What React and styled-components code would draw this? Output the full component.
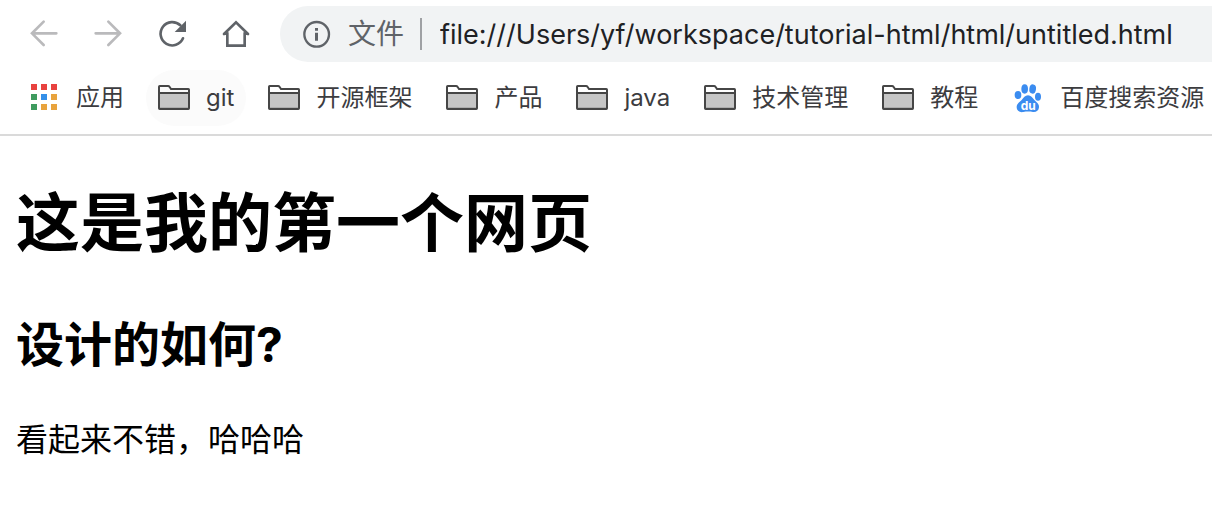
import React from "react";
import styled, { createGlobalStyle } from "styled-components";

const folders = ["git", "开源框架", "产品", "java", "技术管理", "教程"];

const appDots = [
  ["#e8423f", "#e8423f", "#e8423f"],
  ["#3f9b5f", "#348fe8", "#e8a33d"],
  ["#3f9b5f", "#e8a33d", "#e8a33d"],
];

const BackIcon = () => (
  <Icon viewBox="0 0 96 96" aria-hidden="true">
    <Stroke d="M85 46H13M47 11L12 46L47 81" />
  </Icon>
);

const ForwardIcon = () => (
  <Icon viewBox="0 0 96 96" aria-hidden="true">
    <Stroke d="M11 46H83M49 11L84 46L49 81" />
  </Icon>
);

const ReloadIcon = () => (
  <Icon viewBox="0 0 96 96" aria-hidden="true">
    <Stroke d="M81 61A35 35 0 1 1 73 22" />
    <path d="M90 8V42H56Z" fill="currentColor" />
  </Icon>
);

const HomeIcon = () => (
  <Icon viewBox="0 0 96 96" aria-hidden="true">
    <Stroke d="M12 48L48 13L84 48M14 47H22V83H74V47H82" />
  </Icon>
);

const InfoIcon = () => (
  <Icon viewBox="0 0 96 96" aria-hidden="true">
    <circle cx="50" cy="49" r="37" fill="none" stroke="currentColor" strokeWidth="7" />
    <path d="M45 30H54V38H45ZM45 44H54V68H45Z" fill="currentColor" />
  </Icon>
);

const AppsIcon = () => (
  <Icon viewBox="0 0 96 96" aria-hidden="true">
    {appDots.map((row, y) =>
      row.map((color, x) => (
        <rect
          key={`${x}-${y}`}
          x={9 + x * 30}
          y={6 + y * 30}
          width="18"
          height="18"
          fill={color}
        />
      ))
    )}
  </Icon>
);

const FolderIcon = () => (
  <Icon viewBox="0 0 96 96" aria-hidden="true">
    <path d="M3 33H93V81H3Z" fill="#c6c6c6" />
    <path d="M3 75H93V81H3Z" fill="#adadad" />
    <path
      d="M3 14Q3 12 5 12H30Q33 12 35 15L39 21H91Q93 21 93 23V79Q93 81 91 81H5Q3 81 3 79ZM3 33H93"
      fill="none"
      stroke="#464646"
      strokeWidth="6"
    />
  </Icon>
);

const BaiduIcon = () => (
  <Icon viewBox="0 0 96 96" aria-hidden="true">
    <g fill="#3b8cf0">
      <ellipse cx="18" cy="39" rx="10" ry="12" />
      <ellipse cx="38" cy="21" rx="10" ry="14" />
      <ellipse cx="62" cy="21" rx="10" ry="14" transform="rotate(8 62 21)" />
      <ellipse cx="78" cy="44" rx="9" ry="12" />
      <path d="M48 40C57 40 61 47 67 54C74 61 82 66 81 76C80 87 72 91 63 90C53 88 44 88 34 90C23 92 14 86 14 75C14 65 23 61 29 54C35 47 39 40 48 40Z" />
    </g>
    <DuText x="49" y="84" textAnchor="middle">
      du
    </DuText>
  </Icon>
);

const App = () => (
  <>
    <GlobalStyle />
    <Toolbar>
      <NavButton aria-label="后退" disabled>
        <BackIcon />
      </NavButton>
      <NavButton aria-label="前进" disabled>
        <ForwardIcon />
      </NavButton>
      <NavButton aria-label="重新加载">
        <ReloadIcon />
      </NavButton>
      <NavButton aria-label="主页">
        <HomeIcon />
      </NavButton>
      <AddressBar>
        <InfoIcon />
        <Scheme htmlFor="url">文件</Scheme>
        <Divider />
        <UrlInput
          id="url"
          type="text"
          spellCheck={false}
          defaultValue="file:///Users/yf/workspace/tutorial-html/html/untitled.html"
        />
      </AddressBar>
    </Toolbar>
    <BookmarkBar aria-label="书签">
      <Bookmark>
        <AppsIcon />
        应用
      </Bookmark>
      {folders.map((name) => (
        <Bookmark key={name} $active={name === "git"}>
          <FolderIcon />
          {name}
        </Bookmark>
      ))}
      <Bookmark>
        <BaiduIcon />
        百度搜索资源
      </Bookmark>
    </BookmarkBar>
    <Page>
      <Title>这是我的第一个网页</Title>
      <Subtitle>设计的如何?</Subtitle>
      <Text>看起来不错，哈哈哈</Text>
    </Page>
  </>
);

const GlobalStyle = createGlobalStyle`
  * {
    box-sizing: border-box;
  }

  body {
    margin: 0;
    overflow-x: hidden;
    background: #fff;
    font-family: Inter, "Noto Sans CJK SC", sans-serif;
  }

  button,
  input {
    font-family: inherit;
  }
`;

const Icon = styled.svg`
  display: block;
  flex: none;
  width: 32px;
  height: 32px;
`;

const Stroke = styled.path`
  fill: none;
  stroke: currentColor;
  stroke-width: 8px;
  stroke-linecap: round;
`;

const DuText = styled.text`
  fill: #fff;
  font-size: 36px;
  font-weight: 700;
`;

const Toolbar = styled.header`
  display: flex;
  align-items: center;
  gap: 32px;
  padding: 6px 0 8px 28px;
`;

const NavButton = styled.button`
  flex: none;
  padding: 0;
  border: 0;
  background: none;
  color: #5f6368;
  cursor: pointer;

  &:disabled {
    color: #bababc;
    cursor: default;
  }
`;

const AddressBar = styled.div`
  display: flex;
  flex: 1;
  align-items: center;
  min-width: 0;
  height: 56px;
  margin-left: -4px;
  padding-left: 20px;
  border-radius: 28px 0 0 28px;
  background: #f1f3f4;
  color: #5f6368;
`;

const Scheme = styled.label`
  flex: none;
  margin-left: 16px;
  font-size: 28px;
  line-height: 40px;
`;

const Divider = styled.span`
  flex: none;
  width: 2px;
  height: 32px;
  margin: 0 18px 0 16px;
  background: #9fa1a4;
`;

const UrlInput = styled.input`
  flex: 1;
  min-width: 0;
  height: 40px;
  padding: 0;
  border: 0;
  outline: none;
  background: none;
  color: #202124;
  font-size: 27px;
`;

const BookmarkBar = styled.nav`
  display: flex;
  gap: 10px;
  padding: 0 0 8px 16px;
  border-bottom: 2px solid #dadada;
  overflow: hidden;
`;

const Bookmark = styled.button`
  display: flex;
  flex: none;
  align-items: center;
  gap: 16px;
  height: 56px;
  padding: 0 12px;
  border: 0;
  border-radius: 28px;
  background: ${(props) => (props.$active ? "#fbfbfb" : "none")};
  color: #3c3c3f;
  font-size: 24px;
  line-height: 36px;
  white-space: nowrap;
  cursor: pointer;
`;

const Page = styled.main`
  padding: 42px 16px;
  color: #000;
`;

const Title = styled.h1`
  margin: 0 0 44px;
  font-size: 64px;
  line-height: 90px;
`;

const Subtitle = styled.h2`
  margin: 0 0 40px;
  font-size: 48px;
  line-height: 66px;
`;

const Text = styled.p`
  margin: 0;
  font-size: 32px;
  line-height: 44px;
`;

export default App;
